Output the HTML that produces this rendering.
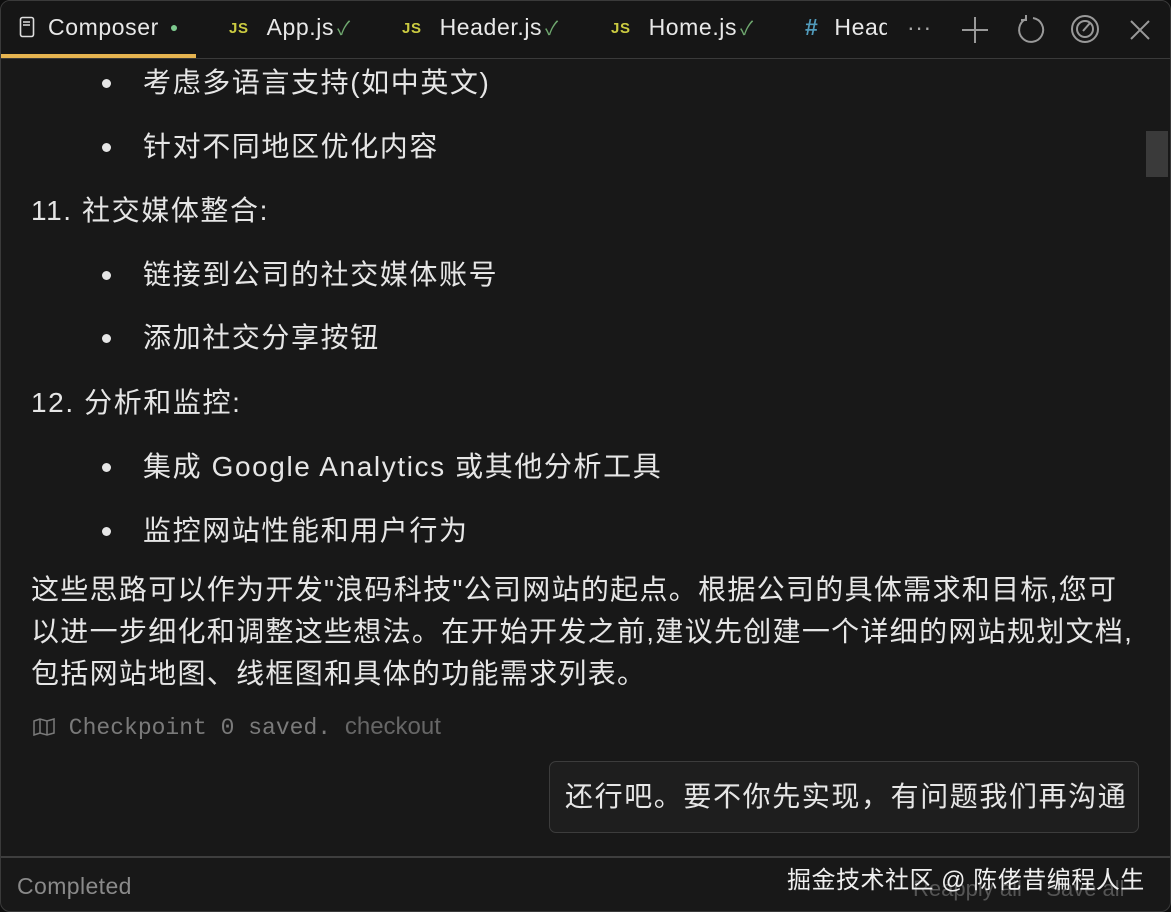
<!DOCTYPE html>
<html><head><meta charset="utf-8"><style>
html,body{margin:0;padding:0;background:#0e0e0e;}
body{width:1171px;height:912px;overflow:hidden;position:relative;font-family:"Liberation Sans","Noto Sans CJK SC",sans-serif;color:#e6e6e6;}
.frame{position:absolute;left:0;top:0;width:1169px;height:910px;border:1px solid #3a3a3a;border-radius:10px;background:#181818;overflow:hidden;}
.tabs{position:absolute;left:0;top:0;width:100%;height:57px;border-bottom:1px solid #3a3a3a;background:#161616;}
.tab{position:absolute;top:13px;font-size:23px;letter-spacing:0.6px;color:#e8e8e8;white-space:nowrap;}
.js{color:#cbcb41;font-weight:bold;font-size:15px;margin-right:18px;vertical-align:2px;}
.chk{color:#6fa86f;font-size:19px;margin-left:3px;}
.ul{position:absolute;left:0;top:53px;width:195px;height:4px;background:#e6b450;}
.t{position:absolute;font-size:28px;letter-spacing:1.6px;line-height:40px;white-space:nowrap;}
.b{position:absolute;left:101px;width:9px;height:9px;border-radius:50%;background:#e6e6e6;}
.p{position:absolute;left:30px;top:568px;font-size:28px;letter-spacing:1.3px;line-height:42px;white-space:nowrap;}
.cp{position:absolute;left:32px;top:712px;font-family:"Liberation Mono",monospace;font-size:23px;color:#7a7a7a;}
.msg{position:absolute;left:548px;top:760px;width:588px;height:70px;border:1px solid #3c3c3c;border-radius:7px;background:#1e1e1e;font-size:28px;letter-spacing:1.6px;line-height:70px;text-indent:15px;white-space:nowrap;}
.bot{position:absolute;left:0;top:855px;width:100%;height:57px;border-top:2px solid #3e3e3e;}
.scroll{position:absolute;left:1145px;top:130px;width:22px;height:46px;background:#3a3a3a;}
</style></head><body><div class="frame">
<div class="tabs">
 <div class="tab" style="left:18px"><svg width="16" height="22" viewBox="0 0 16 22" style="vertical-align:-3px"><rect x="1.5" y="1.5" width="13" height="19" rx="2" fill="none" stroke="#ddd" stroke-width="1.6"/><line x1="4" y1="6" x2="11" y2="6" stroke="#ddd" stroke-width="1.4"/><line x1="4" y1="9" x2="11" y2="9" stroke="#ddd" stroke-width="1.4"/></svg> <span style="margin-left:6px">Composer</span> <span style="color:#7dc98e;font-size:14px;vertical-align:3px;margin-left:4px">●</span></div>
 <div class="tab" style="left:228px"><span class="js">JS</span>App.js<span class="chk">✓</span></div>
 <div class="tab" style="left:401px"><span class="js">JS</span>Header.js<span class="chk">✓</span></div>
 <div class="tab" style="left:610px"><span class="js">JS</span>Home.js<span class="chk">✓</span></div>
 <div class="tab" style="left:804px;width:82px;overflow:hidden"><span style="color:#519aba;font-weight:bold;margin-right:16px">#</span>Header</div>
 <div class="tab" style="left:906px;color:#aaa">···</div>
 <svg style="position:absolute;left:958px;top:13px" width="32" height="32" viewBox="0 0 32 32"><path d="M16 3V29M3 16H29" stroke="#999" stroke-width="2"/></svg>
 <svg style="position:absolute;left:1014px;top:12px" width="32" height="32" viewBox="0 0 32 32"><path d="M11 6A12 12 0 1 0 18 5" fill="none" stroke="#999" stroke-width="2"/><path d="M11 2V7H6" fill="none" stroke="#999" stroke-width="2"/></svg>
 <svg style="position:absolute;left:1068px;top:12px" width="32" height="32" viewBox="0 0 32 32"><circle cx="16" cy="16" r="13" fill="none" stroke="#999" stroke-width="2"/><circle cx="16" cy="16" r="8" fill="none" stroke="#999" stroke-width="2"/><path d="M14 18L21 10" stroke="#999" stroke-width="2"/></svg>
 <svg style="position:absolute;left:1128px;top:18px" width="22" height="22" viewBox="0 0 22 22"><path d="M2 2L20 20M20 2L2 20" stroke="#999" stroke-width="2"/></svg>
 <div class="ul"></div>
</div>
<div class="scroll"></div>
<div class="b" style="top:78px"></div><div class="t" style="left:142px;top:62px">考虑多语言支持(如中英文)</div>
<div class="b" style="top:142px"></div><div class="t" style="left:142px;top:126px">针对不同地区优化内容</div>
<div class="t" style="left:30px;top:190px">11. 社交媒体整合:</div>
<div class="b" style="top:270px"></div><div class="t" style="left:142px;top:254px">链接到公司的社交媒体账号</div>
<div class="b" style="top:333px"></div><div class="t" style="left:142px;top:317px">添加社交分享按钮</div>
<div class="t" style="left:30px;top:382px">12. 分析和监控:</div>
<div class="b" style="top:462px"></div><div class="t" style="left:142px;top:446px">集成 Google Analytics 或其他分析工具</div>
<div class="b" style="top:526px"></div><div class="t" style="left:142px;top:510px">监控网站性能和用户行为</div>
<div class="p">这些思路可以作为开发"浪码科技"公司网站的起点。根据公司的具体需求和目标,您可<br>以进一步细化和调整这些想法。在开始开发之前,建议先创建一个详细的网站规划文档,<br>包括网站地图、线框图和具体的功能需求列表。</div>
<div class="cp"><svg width="22" height="18" viewBox="0 0 22 18" style="vertical-align:-2px"><path d="M1 3L7 1L14 3L21 1V15L14 17L7 15L1 17Z M7 1V15 M14 3V17" fill="none" stroke="#7a7a7a" stroke-width="1.5"/></svg> Checkpoint 0 saved. <span style="font-family:'Liberation Sans',sans-serif;color:#666;font-size:24px">checkout</span></div>
<div class="msg">还行吧。要不你先实现，有问题我们再沟通</div>
<div class="bot">
 <div style="position:absolute;left:16px;top:15px;font-size:23px;letter-spacing:0.4px;color:#8a8a8a">Completed</div>
 <div style="position:absolute;left:912px;top:18px;font-size:22px;color:#555">Reapply all &nbsp;&nbsp; Save all</div>
 <div style="position:absolute;left:786px;top:2px;font-size:24px;letter-spacing:0.5px;color:#f0f0f0">掘金技术社区 @ 陈佬昔编程人生</div>
</div>
</div></body></html>
